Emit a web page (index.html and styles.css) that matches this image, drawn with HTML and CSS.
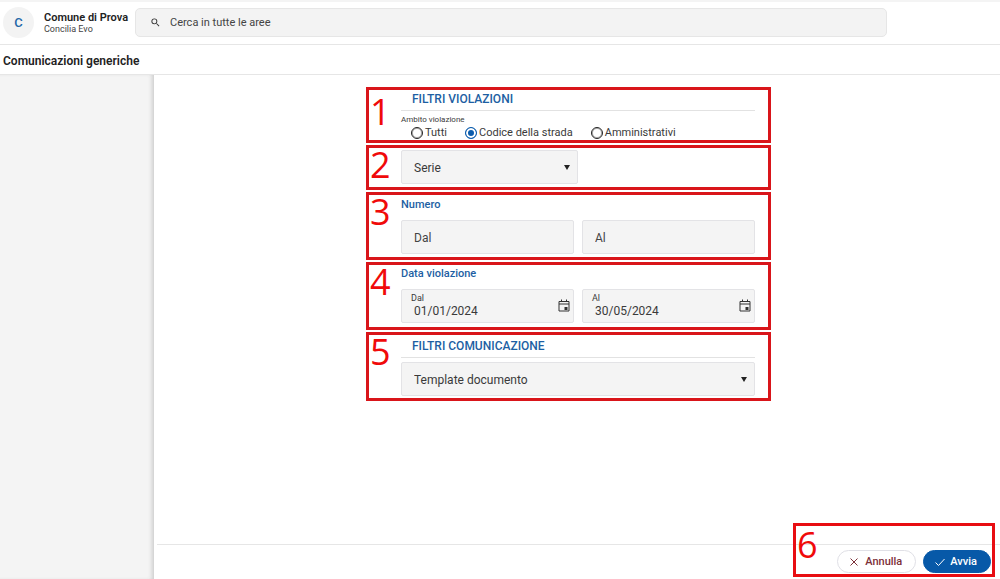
FILE: index.html
```html
<!DOCTYPE html>
<html lang="it">
<head>
<meta charset="utf-8">
<meta name="viewport" content="width=device-width, initial-scale=1">
<title>Comunicazioni generiche</title>
<link rel="stylesheet" href="styles.css">
</head>
<body>
<div class="app">
  <header class="topbar">
    <div class="avatar">C</div>
    <div class="brand">
      <div class="brand-name">Comune di Prova</div>
      <div class="brand-sub">Concilia Evo</div>
    </div>
    <label class="search">
      <svg class="search-icon" viewBox="0 0 24 24" aria-hidden="true"><path d="M15.5 14h-.79l-.28-.27A6.47 6.47 0 0 0 16 9.5 6.5 6.5 0 1 0 9.5 16c1.61 0 3.09-.59 4.23-1.57l.27.28v.79l5 4.99L20.49 19l-4.99-5zm-6 0a4.5 4.5 0 1 1 0-9 4.5 4.5 0 0 1 0 9z"/></svg>
      <input class="search-input" type="search" placeholder="Cerca in tutte le aree" aria-label="Cerca in tutte le aree">
    </label>
  </header>
  <h1 class="page-title">Comunicazioni generiche</h1>
  <div class="body">
    <aside class="sidebar"></aside>
    <main class="main">
      <form class="form" id="filters">
        <section class="panel">
          <span class="num num-low">1</span>
          <h2 class="heading">FILTRI VIOLAZIONI</h2>
          <fieldset class="scope">
            <legend class="scope-label">Ambito violazione</legend>
            <div class="radios">
              <label class="radio"><input type="radio" name="scope">Tutti</label>
              <label class="radio"><input type="radio" name="scope" checked>Codice della strada</label>
              <label class="radio"><input type="radio" name="scope">Amministrativi</label>
            </div>
          </fieldset>
        </section>
        <section class="panel panel-series">
          <span class="num">2</span>
          <div class="select half">
            <select class="field" aria-label="Serie"><option>Serie</option></select>
            <svg class="arrow" viewBox="0 0 6 5" aria-hidden="true"><path d="M0 0h6L3 5z"/></svg>
          </div>
        </section>
        <section class="panel panel-number">
          <span class="num">3</span>
          <h3 class="subheading">Numero</h3>
          <div class="pair">
            <input class="field" type="text" placeholder="Dal" aria-label="Numero dal">
            <input class="field" type="text" placeholder="Al" aria-label="Numero al">
          </div>
        </section>
        <section class="panel panel-date">
          <span class="num">4</span>
          <h3 class="subheading">Data violazione</h3>
          <div class="pair">
            <div class="date">
              <div class="date-text">
                <label class="date-label" for="from">Dal</label>
                <input class="date-input" id="from" type="text" value="01/01/2024">
              </div>
              <button class="date-button" type="button" aria-label="Scegli data dal">
                <svg viewBox="0 0 12 13" aria-hidden="true"><path d="M1 2.500h10v9.500H1zM3.500 .5v2M8.500 .5v2M1 5h10" fill="none" stroke="#333"/><path d="M6.500 8h3v3h-3z" fill="#333"/></svg>
              </button>
            </div>
            <div class="date">
              <div class="date-text">
                <label class="date-label" for="to">Al</label>
                <input class="date-input" id="to" type="text" value="30/05/2024">
              </div>
              <button class="date-button" type="button" aria-label="Scegli data al">
                <svg viewBox="0 0 12 13" aria-hidden="true"><path d="M1 2.500h10v9.500H1zM3.500 .5v2M8.500 .5v2M1 5h10" fill="none" stroke="#333"/><path d="M6.500 8h3v3h-3z" fill="#333"/></svg>
              </button>
            </div>
          </div>
        </section>
        <section class="panel panel-message">
          <span class="num">5</span>
          <h2 class="heading">FILTRI COMUNICAZIONE</h2>
          <div class="select">
            <select class="field" aria-label="Template documento"><option>Template documento</option></select>
            <svg class="arrow" viewBox="0 0 6 5" aria-hidden="true"><path d="M0 0h6L3 5z"/></svg>
          </div>
        </section>
      </form>
      <footer class="footer">
        <button class="btn btn-cancel" type="button">
          <svg viewBox="0 0 10 10" aria-hidden="true"><path d="M1.500 1.500l7 7M8.500 1.500l-7 7"/></svg>Annulla
        </button>
        <button class="btn btn-start" type="submit" form="filters">
          <svg viewBox="0 0 10 10" aria-hidden="true"><path d="M.5 5.500l3 3 6-6.500"/></svg>Avvia
        </button>
        <div class="frame"><span class="num">6</span></div>
      </footer>
    </main>
  </div>
</div>
</body>
</html>
```
FILE: styles.css
```css
* { box-sizing: border-box; }

body {
  margin: 0;
  background: #fff;
  color: #3a3a3a;
  font-family: Roboto, "Liberation Sans", sans-serif;
  font-size: 12px;
}

input, select, button { font: inherit; color: inherit; }

.app {
  display: flex;
  flex-direction: column;
  min-height: 100vh;
  border-top: 2px solid #f4f4f4;
}

.topbar {
  display: flex;
  align-items: center;
  height: 43px;
  padding: 0 113px 1px 3px;
  border-bottom: 1px solid #e6e6e6;
}

.avatar {
  display: grid;
  place-items: center;
  width: 31px;
  height: 31px;
  border-radius: 50%;
  background: #f3f3f3;
  color: #2467a8;
  font-size: 13px;
  font-weight: 500;
}

.brand { width: 91px; margin-left: 10px; color: #222; }
.brand-name { font-size: 11px; line-height: 12px; font-weight: 600; white-space: nowrap; }
.brand-sub { font-size: 9px; line-height: 10px; color: #444; }

.search {
  display: flex;
  flex: 1;
  align-items: center;
  gap: 9px;
  height: 29px;
  padding: 0 14px;
  border: 1px solid #e6e6e6;
  border-radius: 5px;
  background: #f3f3f3;
}

.search-icon { width: 11px; height: 11px; fill: #333; }

.search-input {
  flex: 1;
  min-width: 0;
  padding: 0;
  border: 0;
  outline: 0;
  background: transparent;
  font-size: 11px;
}

input::placeholder { color: #444; opacity: 1; }

.page-title {
  margin: 0;
  padding: 3px 3px 0;
  border-bottom: 1px solid #e6e6e6;
  color: #222;
  font-size: 12px;
  line-height: 26px;
  font-weight: 600;
}

.body { display: flex; flex: 1; }

.sidebar {
  width: 154px;
  background: #f4f4f4;
  box-shadow: inset -4px 0 4px -2px #ccc;
}

.main {
  display: flex;
  flex: 1;
  flex-direction: column;
  justify-content: space-between;
  align-items: center;
  padding-top: 12px;
}

.form {
  display: flex;
  flex-direction: column;
  gap: 2px;
  width: 100%;
  max-width: 405px;
  margin-right: 17px;
}

.panel {
  position: relative;
  padding: 0 13px 0 32px;
  border: 3px solid #d9151a;
}

.panel-series { padding-top: 2px; padding-bottom: 3px; }
.panel-number { padding-top: 1px; padding-bottom: 3px; }
.panel-date { padding-bottom: 4px; }
.panel-message { padding-top: 2px; padding-bottom: 2px; }
.panel-message .heading { margin-bottom: 4px; }

.num {
  position: absolute;
  top: 0;
  left: 1px;
  color: #f00a0a;
  font-family: "Open Sans", "Noto Sans", sans-serif;
  font-size: 36px;
  line-height: 34px;
  font-weight: 500;
}

.num-low { top: 5px; }

.heading {
  margin: 0;
  padding: 0 11px 2px;
  border-bottom: 1px solid #e2e2e2;
  color: #1d5fa3;
  font-size: 12px;
  line-height: 18px;
  font-weight: 500;
}

.subheading {
  margin: 0 0 6px;
  color: #1d5fa3;
  font-size: 11px;
  line-height: 18px;
  font-weight: 500;
}

.scope { margin: 0; padding: 0; border: 0; }
.scope-label { padding: 4px 0 0; font-size: 8px; line-height: 10px; }

.radios { display: flex; gap: 18px; padding-left: 10px; }

.radio {
  display: flex;
  align-items: center;
  gap: 2px;
  font-size: 11px;
  line-height: 15px;
}

.radio input {
  appearance: none;
  width: 12px;
  height: 12px;
  margin: 0;
  border: 1px solid #222;
  border-radius: 50%;
  box-shadow: inset 0 0 0 1px #aaa;
}

.radio input:checked {
  border-color: #0b5cad;
  background: #0b5cad;
  box-shadow: inset 0 0 0 2px #fff;
}

.field, .date {
  width: 100%;
  min-width: 0;
  height: 34px;
  border: 1px solid #e3e3e6;
  border-radius: 2px;
  background: #f4f4f4;
}

.field { padding: 1px 12px 0; outline: 0; appearance: none; }

.select { display: grid; align-items: center; }
.select > * { grid-area: 1 / 1; }
.half { width: 50%; }

.arrow {
  justify-self: end;
  width: 6px;
  height: 5px;
  margin-right: 8px;
  fill: #222;
  pointer-events: none;
}

.pair { display: grid; grid-template-columns: 1fr 1fr; gap: 8px; }

.date {
  display: flex;
  align-items: center;
  padding: 0 3px 2px 9px;
}

.date-text { display: flex; flex: 1; flex-direction: column; min-width: 0; }
.date-label { font-size: 9px; line-height: 12px; }

.date-input {
  width: 100%;
  height: 14px;
  padding: 0 3px;
  border: 0;
  outline: 0;
  background: transparent;
}

.date-button { display: flex; padding: 0; border: 0; background: transparent; }
.date-button svg { width: 12px; height: 13px; }

.footer {
  position: relative;
  display: flex;
  align-self: stretch;
  justify-content: flex-end;
  gap: 7px;
  margin-left: 3px;
  padding: 5px 9px 6px;
  border-top: 1px solid #e6e6e6;
}

.btn {
  display: flex;
  align-items: center;
  justify-content: center;
  height: 23px;
  padding: 0 13px 0 11px;
  border: 1px solid #e0e0e6;
  border-radius: 12px;
  background: #fff;
  font-size: 11px;
  font-weight: 500;
}

.btn svg { width: 10px; height: 10px; fill: none; stroke: currentColor; }
.btn-cancel { gap: 6px; color: #7c3038; }
.btn-start { gap: 5px; border-color: #0759a8; background: #0759a8; color: #fff; }

.frame {
  position: absolute;
  right: 5px;
  bottom: 2px;
  width: 202px;
  height: 54px;
  border: 3px solid #e80d12;
  pointer-events: none;
}
.frame .num { top: 2px; }
```
